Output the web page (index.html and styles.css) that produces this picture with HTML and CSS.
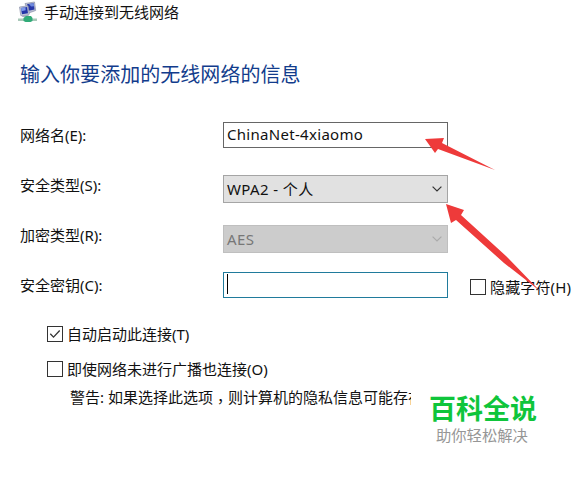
FILE: index.html
```html
<!DOCTYPE html>
<html lang="zh-CN">
<head>
<meta charset="utf-8">
<title>手动连接到无线网络</title>
<link rel="stylesheet" href="styles.css">
</head>
<body>
<main class="wizard">
  <header class="titlebar">
    <svg class="net-icon" width="20" height="22" viewBox="0 0 20 22">
      <path d="M7 2.5 16.5 1l1.2 8.5-7 2.5z" fill="#b9bfd2" stroke="#8b91aa" stroke-width=".7"/>
      <path d="M9 3.2 15.7 2.2l.8 6.3-6 1.2z" fill="#2838a8"/>
      <path d="m11 3 4.7-.8.4 3-3 .4z" fill="#6f8be0"/>
      <path d="M1.5 6 10 4.8l1.3 8.4-4 2.3-4.5-1z" fill="#c4c9da" stroke="#8b91aa" stroke-width=".7"/>
      <path d="m2.8 7 6.3-1 .9 6.2-6 1z" fill="#2434a6"/>
      <path d="m3 7 4.4-.7.3 3-4.3 1z" fill="#7d98e8"/>
      <path d="m5 14 5-.5 1.5 2.5H4z" fill="#a5abc0"/>
      <path d="M0 17.5h19V20H0z" fill="#a9c8b9"/>
      <path d="M5.500 17 8 15h5l1.500 2v3l-2 1h-5l-2-1z" fill="#31ab78"/>
    </svg>
    <span>手动连接到无线网络</span>
  </header>
  <h1 class="heading">输入你要添加的无线网络的信息</h1>
  <form class="form">
    <div class="row">
      <span class="label">网络名(E):</span>
      <div class="field name"><span class="ssid">ChinaNet-4xiaomo</span></div>
    </div>
    <div class="row">
      <span class="label">安全类型(S):</span>
      <div class="field select"><span class="wpa">WPA2 - 个人</span><svg class="chevron" width="10" height="6" viewBox="0 0 10 6"><path d="m.6.6 4.4 4.4L9.4.6"/></svg></div>
    </div>
    <div class="row">
      <span class="label">加密类型(R):</span>
      <div class="field select disabled"><span class="wpa">AES</span><svg class="chevron" width="10" height="6" viewBox="0 0 10 6"><path d="m.6.6 4.4 4.4L9.4.6"/></svg></div>
    </div>
    <div class="row">
      <span class="label">安全密钥(C):</span>
      <div class="field key"><i class="caret"></i></div>
      <div class="check hide"><i class="box"></i><span>隐藏字符(H)</span></div>
    </div>
  </form>
  <section class="options">
    <div class="check"><i class="box"><svg width="14" height="14" viewBox="0 0 14 14"><path d="m2.3 6.8 3.2 3.3 6.2-6.6"/></svg></i><span>自动启动此连接(T)</span></div>
    <div class="check"><i class="box"></i><span>即使网络未进行广播也连接(O)</span></div>
    <p class="warning">警告: 如果选择此选项<span class="comma">，</span>则计算机的隐私信息可能存在</p>
  </section>
</main>
<aside class="brand">
  <strong>百科全说</strong>
  <span>助你轻松解决</span>
</aside>
<svg class="arrows" width="581" height="477" viewBox="0 0 581 477">
  <path d="m425 139 19-1-2 5 53 27-57-21-3 4z"/>
  <path d="m446 204 18 6-3 5 45 41 34 35-36-28-48-43-5 3z"/>
</svg>
</body>
</html>
```
FILE: styles.css
```css
* { box-sizing: border-box; }
body {
  margin: 0;
  width: 581px;
  height: 477px;
  overflow: hidden;
  position: relative;
  background: #fff;
  color: #111;
  font: 15px/20px "Noto Sans", "Noto Sans CJK SC", sans-serif;
  white-space: nowrap;
}
.titlebar { display: flex; height: 26px; padding-left: 18px; gap: 6px; line-height: 25px; }
.net-icon { flex: none; margin-top: 1px; }
.heading {
  margin: 34px 0 0 20px;
  font-size: 20px;
  line-height: 30px;
  font-weight: 400;
  letter-spacing: .04px;
  color: #123c8c;
}
.form { margin: 20px 0 0 20px; }
.row { display: flex; height: 50px; align-items: flex-start; }
.label { width: 203px; line-height: 50px; }
.field {
  width: 225px;
  height: 28px;
  margin-top: 15px;
  padding: 0 5px 0 3px;
  border: 1px solid #a5a5a5;
  display: flex;
  align-items: center;
  justify-content: space-between;
}
.name { height: 26px; margin-top: 12px; padding-bottom: 2px; border-color: #666; }
.ssid { letter-spacing: .3px; }
.wpa { letter-spacing: .4px; }
.select { background: #e1e1e1; }
.disabled { background: #ccc; border-color: #bfbfbf; color: #777; }
.chevron path { fill: none; stroke: #333; stroke-width: 1.2; }
.disabled .chevron path { stroke: #aaa; }
.key { height: 26px; margin-top: 12px; border-color: #207b9c; }
.caret { width: 1px; height: 20px; margin-bottom: 2px; background: #000; }
.check { display: flex; align-items: center; height: 35px; gap: 4px; }
.box { flex: none; width: 16px; height: 16px; border: 1px solid #333; }
.box svg { display: block; }
.box path { fill: none; stroke: #333; stroke-width: 1.3; }
.hide { height: 50px; margin: 2px 0 0 22px; letter-spacing: .15px; }
.options { margin: 6px 0 0 47px; }
.warning { margin: 1px 0 0 23px; width: 341px; overflow: hidden; }
.comma {
  display: inline-block;
  height: 20px;
  vertical-align: top;
  font-family: "Noto Sans CJK TC", sans-serif;
  line-height: 28px;
}
.brand {
  position: absolute;
  left: 411px;
  top: 386px;
  width: 146px;
  height: 68px;
  padding: 7px 0 0 18px;
  display: flex;
  flex-direction: column;
  background: #fff;
}
.brand strong { font-size: 27px; line-height: 32px; font-weight: 700; color: #0fc53b; }
.brand span { margin-left: 7px; font-size: 15.3px; line-height: 20px; color: #969696; }
.arrows { position: absolute; left: 0; top: 0; }
.arrows path { fill: #ee3a3a; }
```
